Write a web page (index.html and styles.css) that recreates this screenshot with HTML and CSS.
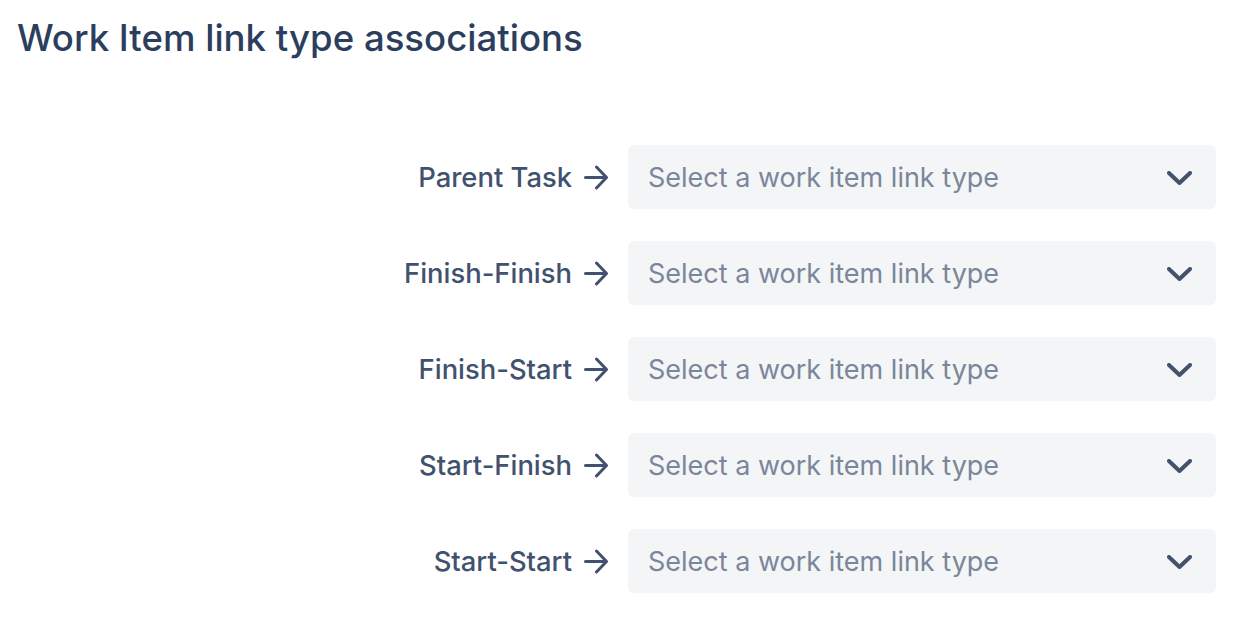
FILE: index.html
```html
<!DOCTYPE html>
<html>
<head>
    <title>Work Item link type associations</title>
    <link rel="stylesheet" href="styles.css">
</head>
<body>
    <div class="page">
        <h1 class="page-title">Work Item link type associations</h1>

        <div class="assoc-list">
            <div class="assoc-row">
                <span class="assoc-label">Parent Task</span>
                <svg class="assoc-arrow" viewBox="0 0 24 25"><path d="M1.5 12.5h21M12.5 2l10 10.5-10 10.5"/></svg>
                <div class="assoc-select">
                    <span class="placeholder">Select a work item link type</span>
                    <svg class="chevron" viewBox="0 0 25 14"><path d="M2 2l10.5 10L23 2"/></svg>
                </div>
            </div>
            <div class="assoc-row">
                <span class="assoc-label">Finish-Finish</span>
                <svg class="assoc-arrow" viewBox="0 0 24 25"><path d="M1.5 12.5h21M12.5 2l10 10.5-10 10.5"/></svg>
                <div class="assoc-select">
                    <span class="placeholder">Select a work item link type</span>
                    <svg class="chevron" viewBox="0 0 25 14"><path d="M2 2l10.5 10L23 2"/></svg>
                </div>
            </div>
            <div class="assoc-row">
                <span class="assoc-label">Finish-Start</span>
                <svg class="assoc-arrow" viewBox="0 0 24 25"><path d="M1.5 12.5h21M12.5 2l10 10.5-10 10.5"/></svg>
                <div class="assoc-select">
                    <span class="placeholder">Select a work item link type</span>
                    <svg class="chevron" viewBox="0 0 25 14"><path d="M2 2l10.5 10L23 2"/></svg>
                </div>
            </div>
            <div class="assoc-row">
                <span class="assoc-label">Start-Finish</span>
                <svg class="assoc-arrow" viewBox="0 0 24 25"><path d="M1.5 12.5h21M12.5 2l10 10.5-10 10.5"/></svg>
                <div class="assoc-select">
                    <span class="placeholder">Select a work item link type</span>
                    <svg class="chevron" viewBox="0 0 25 14"><path d="M2 2l10.5 10L23 2"/></svg>
                </div>
            </div>
            <div class="assoc-row">
                <span class="assoc-label">Start-Start</span>
                <svg class="assoc-arrow" viewBox="0 0 24 25"><path d="M1.5 12.5h21M12.5 2l10 10.5-10 10.5"/></svg>
                <div class="assoc-select">
                    <span class="placeholder">Select a work item link type</span>
                    <svg class="chevron" viewBox="0 0 25 14"><path d="M2 2l10.5 10L23 2"/></svg>
                </div>
            </div>
        </div>
    </div>
</body>
</html>
```

FILE: styles.css
```css
body {
    font-family: Inter, "Noto Sans", sans-serif;
    margin: 0;
    background-color: #ffffff;
    color: #42526e;
}
.page {
    padding: 16px 28px 0 17px;
}
.page-title {
    margin: 0;
    font-size: 36.6px;
    font-weight: 500;
    color: #2c3e5d;
    line-height: 44px;
}
.assoc-list {
    display: flex;
    flex-direction: column;
    gap: 32px;
    margin-top: 85px;
}
.assoc-row {
    display: flex;
    align-items: center;
    justify-content: flex-end;
}
.assoc-label {
    font-size: 27.4px;
    font-weight: 500;
    color: #42526e;
}
.assoc-arrow {
    width: 24px;
    height: 25px;
    margin: 1px 20px 0 12px;
    fill: none;
    stroke: #42526e;
    stroke-width: 3;
    stroke-linecap: round;
    stroke-linejoin: round;
}
.assoc-select {
    width: 588px;
    height: 64px;
    box-sizing: border-box;
    display: flex;
    align-items: center;
    justify-content: space-between;
    padding: 0 24px 0 20px;
    background-color: #f4f5f7;
    border-radius: 6px;
}
.placeholder {
    font-size: 27px;
    color: #7a869a;
}
.chevron {
    width: 25px;
    height: 14px;
    margin-top: 1px;
    fill: none;
    stroke: #42526e;
    stroke-width: 4;
    stroke-linecap: round;
    stroke-linejoin: round;
}
```
